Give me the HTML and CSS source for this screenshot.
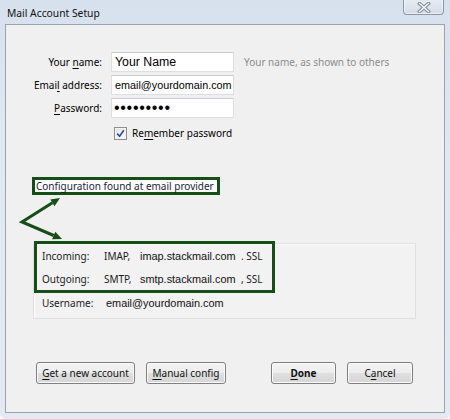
FILE: index.html
```html
<!DOCTYPE html>
<html lang="en">
<head>
<meta charset="utf-8">
<title>Mail Account Setup</title>
<link rel="stylesheet" href="styles.css">
</head>
<body>
<div class="window">
  <header class="titlebar">
    <span class="title">Mail Account Setup</span>
    <span class="close" aria-label="Close">
      <svg width="14" height="11" viewBox="0 0 14 11">
        <path d="M2.5 1.5 L11.5 9.5 M11.5 1.5 L2.5 9.5" stroke="#7d8793" stroke-width="3.4" stroke-linecap="square" fill="none"/>
        <path d="M2.5 1.5 L11.5 9.5 M11.5 1.5 L2.5 9.5" stroke="#ffffff" stroke-width="1.4" stroke-linecap="square" fill="none"/>
      </svg>
    </span>
  </header>

  <main class="client">
    <div class="fields">
      <span class="field-label">Your <u>n</u>ame:</span>
      <div class="textbox textbox-name">Your Name</div>
      <span class="hint">Your name, as shown to others</span>

      <span class="field-label">Emai<u>l</u> address:</span>
      <div class="textbox">email@yourdomain.com</div>
      <span></span>

      <span class="field-label"><u>P</u>assword:</span>
      <div class="textbox textbox-password">•••••••••</div>
      <span></span>

      <div class="remember">
        <span class="checkbox">
          <svg width="9" height="9" viewBox="0 0 9 9"><path d="M1.2 4.6 L3.6 7.2 L7.8 1.2" stroke="#2a4d9b" stroke-width="1.6" fill="none"/></svg>
        </span>
        <span>Re<u>m</u>ember password</span>
      </div>
    </div>

    <div class="config-note">Configuration found at email provider</div>

    <svg class="pointer" width="80" height="48" viewBox="0 0 80 48">
      <polyline points="46.4,7.8 16,27 47.7,40.5" fill="none" stroke="#174d17" stroke-width="3" stroke-linejoin="miter"/>
      <polygon points="54,3 48.5,11.2 44.3,4.4" fill="#174d17"/>
      <polygon points="56,44 46.1,44.2 49.3,36.8" fill="#174d17"/>
    </svg>

    <section class="details">
      <div class="servers">
        <div class="server-row">
          <span class="row-label">Incoming:</span>
          <span class="protocol">IMAP,</span>
          <span class="host">imap.stackmail.com</span>
          <span class="security">. SSL</span>
        </div>
        <div class="server-row">
          <span class="row-label">Outgoing:</span>
          <span class="protocol">SMTP,</span>
          <span class="host">smtp.stackmail.com</span>
          <span class="security">, SSL</span>
        </div>
      </div>
      <div class="user-row">
        <span class="user-label">Username:</span>
        <span class="host">email@yourdomain.com</span>
      </div>
    </section>

    <footer class="buttons">
      <div class="button-group">
        <button class="btn btn-new"><u>G</u>et a new account</button>
        <button class="btn btn-manual"><u>M</u>anual config</button>
      </div>
      <div class="button-group">
        <button class="btn btn-done"><u>D</u>one</button>
        <button class="btn btn-cancel">C<u>a</u>ncel</button>
      </div>
    </footer>
  </main>
</div>
</body>
</html>
```

FILE: styles.css
```css
* {
  box-sizing: border-box;
}

html,
body {
  margin: 0;
  padding: 0;
}

body {
  width: 450px;
  height: 419px;
  overflow: hidden;
  font-family: "Noto Sans", "Open Sans", sans-serif;
  font-size: 10px;
  color: #111;
}

u {
  text-decoration-thickness: 1px;
  text-underline-offset: 1.5px;
}

/* Aero-style frame around the dialog */
.window {
  width: 450px;
  height: 419px;
  display: flex;
  flex-direction: column;
  padding: 0 5px 6px 5px;
  background: linear-gradient(180deg, #d7e1ed 0%, #dfe7f1 30%, #e3eaf2 100%);
  border-radius: 0 0 5px 5px;
}

.titlebar {
  height: 24px;
  display: flex;
  align-items: flex-start;
  justify-content: space-between;
  position: relative;
}

.title {
  margin: 7px 0 0 2px;
  font-size: 10.3px;
  line-height: 12px;
  color: #111;
}

.close {
  width: 41px;
  height: 16px;
  margin: -1px 1px 0 0;
  display: flex;
  align-items: center;
  justify-content: center;
  border: 1px solid #8a96a4;
  border-top: none;
  border-radius: 0 0 4px 4px;
  background: linear-gradient(180deg, #e6ecf3 0%, #dbe3ec 60%, #d3dce7 100%);
  box-shadow: inset 0 0 0 1px rgba(255, 255, 255, 0.55);
}

.close svg {
  display: block;
  margin-top: 1px;
}

/* Dialog client area */
.client {
  flex: 1;
  display: flex;
  flex-direction: column;
  align-items: flex-start;
  background: #f0f0f0;
  border: 1px solid #9aa4ae;
}

.fields {
  display: grid;
  grid-template-columns: 96px 123px auto;
  grid-auto-rows: 20px;
  column-gap: 9px;
  row-gap: 3px;
  margin-top: 27px;
  align-items: center;
}

.field-label {
  text-align: right;
  line-height: 14px;
  color: #000;
}

.textbox {
  height: 20px;
  display: flex;
  align-items: center;
  padding-left: 3px;
  background: #fff;
  border: 1px solid #dcdfe4;
  border-top-color: #c9ccd2;
  font-family: "Liberation Sans", Arial, sans-serif;
  font-size: 10.8px;
  color: #000;
  white-space: nowrap;
  overflow: hidden;
}

.textbox-name {
  font-size: 12.3px;
}

.textbox-password {
  font-size: 16px;
  letter-spacing: 0.7px;
  padding-left: 2px;
}

.hint {
  margin-left: 1px;
  color: #8c8c8c;
  line-height: 14px;
  white-space: nowrap;
}

.remember {
  grid-column: 2 / span 2;
  display: flex;
  align-items: center;
  gap: 5px;
  height: 13px;
  margin: 4px 0 0 3px;
  line-height: 13px;
  white-space: nowrap;
  color: #000;
}

.checkbox {
  width: 13px;
  height: 13px;
  display: flex;
  align-items: center;
  justify-content: center;
  border: 1px solid #8f8f8f;
  background: linear-gradient(135deg, #dcdcdc 0%, #f6f6f6 60%, #ffffff 100%);
  box-shadow: inset 0 0 0 1px #f4f4f4;
}

/* Annotation: detected configuration */
.config-note {
  margin: 36px 0 0 26px;
  height: 18px;
  padding: 0 3px 0 1px;
  border: 3px solid #174d17;
  background: #ffffff;
  line-height: 12px;
  color: #1c1c3c;
  white-space: nowrap;
}

.pointer {
  display: block;
}

.details {
  margin-left: 27px;
  width: 383px;
  padding-bottom: 5px;
  background: #f2f2f2;
  border: 1px solid #e0e0e0;
  box-shadow: inset 1px 1px 0 #fbfbfb;
}

.servers {
  width: 241px;
  margin-top: -3px;
  padding: 0 0 0 5px;
  border: 3px solid #174d17;
}

.server-row,
.user-row {
  display: flex;
  align-items: center;
  white-space: nowrap;
  color: #1a1a1a;
}

.server-row {
  height: 23px;
}

.user-row {
  height: 20px;
  padding-left: 8px;
}

.row-label {
  width: 62px;
}

.protocol {
  width: 36px;
}

.user-label {
  width: 64px;
}

.host {
  width: 101px;
  font-family: "Liberation Sans", Arial, sans-serif;
  font-size: 10.9px;
  color: #111;
}

.user-row .host {
  width: auto;
}

/* Dialog buttons */
.buttons {
  margin-top: auto;
  width: 100%;
  display: flex;
  justify-content: space-between;
  padding: 0 31px 28px 30px;
}

.button-group {
  display: flex;
  gap: 11px;
}

.btn {
  height: 22px;
  padding: 0;
  font-family: inherit;
  font-size: 10px;
  color: #111;
  border: 1px solid #7f7f7f;
  border-radius: 3px;
  background: linear-gradient(180deg, #f4f4f4 0%, #ececec 48%, #dfdfdf 52%, #d6d6d6 100%);
  box-shadow: inset 0 0 0 1px #fbfbfb;
}

.btn-new {
  width: 99px;
}

.btn-manual {
  width: 80px;
}

.btn-done {
  width: 65px;
  font-weight: 700;
}

.btn-cancel {
  width: 66px;
}
```
